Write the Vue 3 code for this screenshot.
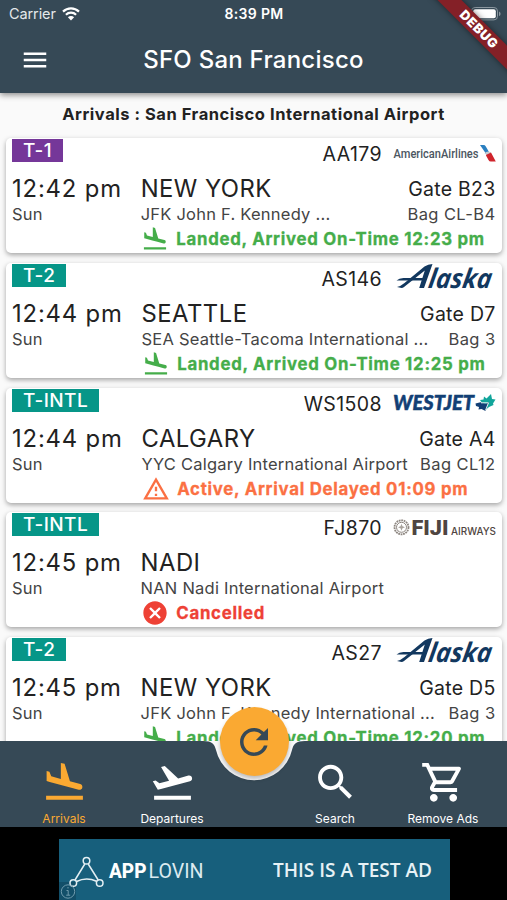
<template>
  <div class="screen">
    <header class="app-bar">
      <div class="status-bar">
        <div class="carrier">
          <span>Carrier</span>
          <svg width="18" height="14" viewBox="0 0 18 14">
            <path d="M1 4.6a11.6 11.6 0 0 1 16 0" class="wave" />
            <path d="M3.9 7.7a7.4 7.4 0 0 1 10.2 0" class="wave" />
            <path d="M9 13.4 5.9 10.2a4.4 4.4 0 0 1 6.2 0z" fill="#fff" />
          </svg>
        </div>
        <div class="clock">8:39 PM</div>
        <svg class="battery" width="30" height="14" viewBox="0 0 30 14">
          <rect x="0.5" y="0.5" width="26" height="12.4" rx="3.6" fill="none" stroke="#8b979f" />
          <rect x="2.2" y="2.2" width="22.6" height="9" rx="2" fill="#fff" />
          <path d="M28 4.5c2 .8 2 3.8 0 4.6z" fill="#8b979f" />
        </svg>
      </div>
      <div class="title-bar">
        <svg class="menu" viewBox="0 0 24 24">
          <path fill="currentColor" d="M3 18h18v-2H3v2zm0-5h18v-2H3v2zm0-7v2h18V6H3z" />
        </svg>
        <h1>SFO San Francisco</h1>
      </div>
      <div class="debug"><span>DEBUG</span></div>
    </header>

    <main class="list">
      <h2>Arrivals : San Francisco International Airport</h2>
      <article v-for="f in flights" :key="f.code" class="card">
        <div class="top">
          <span class="terminal" :class="{ purple: f.terminal === 'T-1' }">{{ f.terminal }}</span>
          <span class="code">{{ f.code }}</span>
          <svg class="logo" width="104" height="32" viewBox="392 0 104 32">
            <g v-if="f.airline === 'american'">
              <text x="393.5" y="20" class="aa" textLength="85" lengthAdjust="spacingAndGlyphs">AmericanAirlines</text>
              <path d="M480 7h3.5q1.5 0 2.3 1.4L489 14l-3.5 1z" fill="#2a7fc0" />
              <path d="M486.5 14.5 491 14.5l4.8 9h-5q-1.5 0-2.3-1.5l-2.5-4.5z" fill="#d0242c" />
              <path d="M484.5 15.5q3-3.5 6.5-1l-4.5 2.3z" fill="#c6ccd2" />
            </g>
            <g v-else-if="f.airline === 'alaska'" fill="#12385f">
              <path d="M396.5 17.5q2.5-2.5 7-2.5h21l-.5 2.6h-17.5z" />
              <path d="M397 24q4-1 7.5-4L424.5 3.5q3.5-2.5 8-2.5l-8.5 24h-4.8l5.6-17.5L404 24q-1 1-2.5 1z" />
              <g transform="translate(427.5 25) skewX(-9)">
                <text class="alaska" textLength="63" lengthAdjust="spacingAndGlyphs">laska</text>
              </g>
            </g>
            <g v-else-if="f.airline === 'westjet'">
              <text x="393" y="22" class="westjet" textLength="81" lengthAdjust="spacingAndGlyphs">WESTJET</text>
              <path d="m480 12 3.5-.5.5-3 2.5 2 4.5-4.500 1 5 3.5.5-2.500 4 .5 1.500-4.500 2-3.500 3-2-5z" fill="#11a59b" />
              <path d="m475.5 15.5 5-1.300 5.5 1.500 3-2-3.500 9.300-4-2-3 .5.500-2.500-3-1z" fill="#123f75" />
              <path d="M481 14.8h7.5l-3 7.5" fill="none" stroke="#fff" stroke-width=".9" />
            </g>
            <g v-else>
              <circle cx="401.5" cy="15.3" r="7" class="ring" stroke-width="1.8" stroke-dasharray="1.8 .7" />
              <circle cx="401.5" cy="15.3" r="5" class="ring" stroke-width="1" />
              <path d="m401.5 11.8 1 2.5 2.5 1-2.5 1-1 2.5-1-2.5-2.5-1 2.5-1z" fill="#aaa49e" />
              <text x="411.5" y="22.5" class="fiji" textLength="37" lengthAdjust="spacingAndGlyphs">FIJI</text>
              <text x="451" y="22.5" class="airways" textLength="45" lengthAdjust="spacingAndGlyphs">AIRWAYS</text>
            </g>
          </svg>
        </div>
        <div class="body">
          <div class="when">
            <div class="time">{{ f.time }}</div>
            <div class="day">Sun</div>
          </div>
          <div class="info">
            <div class="row big">
              <span>{{ f.city }}</span>
              <span class="gate">{{ f.gate }}</span>
            </div>
            <div class="row small">
              <span>{{ f.airport }}</span>
              <span class="bag">{{ f.bag }}</span>
            </div>
            <div class="status" :class="f.state">
              <svg viewBox="0 0 24 24"><path fill="currentColor" :d="icons[f.state]" /></svg>
              <span>{{ f.status }}</span>
            </div>
          </div>
        </div>
      </article>
    </main>

    <nav class="bottom-bar">
      <svg class="notch" width="507" height="86" viewBox="0 0 507 86">
        <path d="M0 0H203C212 0 214.5 3 216 9A39 39 0 0 0 292 9C293.5 3 296 0 305 0H507V86H0z" fill="#364956" />
      </svg>
      <template v-for="(t, i) in tabs" :key="t.label">
        <div v-if="i === 2" class="gap"></div>
        <div class="tab" :class="{ active: i === 0 }">
          <svg viewBox="0 0 24 24"><path fill="currentColor" :d="icons[t.icon]" /></svg>
          <span>{{ t.label }}</span>
        </div>
      </template>
      <button class="fab">
        <svg viewBox="0 0 24 24"><path fill="currentColor" :d="icons.refresh" /></svg>
      </button>
    </nav>

    <footer class="ad">
      <svg width="391" height="61" viewBox="59 839 391 61">
        <rect x="59" y="839" width="391" height="61" fill="#175f7c" />
        <rect x="59" y="882" width="17" height="18" fill="#124f69" />
        <g fill="none" stroke="#e4eff3" stroke-width="1.5">
          <path d="M84.8 864 75 880M88.2 864l10 16M76.5 881.5q10-5 20-.2" />
          <circle cx="86.5" cy="860.8" r="3.3" />
          <circle cx="73.3" cy="883" r="3.3" />
          <circle cx="99.7" cy="883" r="3.3" />
        </g>
        <g fill="none" stroke="#6f9bad">
          <circle cx="68" cy="891.5" r="6.7" />
          <path d="M68 887v1.5M66.5 890.5H68.2v4.5M66.2 895.2h4" />
        </g>
        <text x="109" y="877.5" class="brand bold" textLength="37.5" lengthAdjust="spacingAndGlyphs">APP</text>
        <text x="148.5" y="877.5" class="brand" textLength="55" lengthAdjust="spacingAndGlyphs">LOVIN</text>
        <text x="273" y="877" class="test" textLength="159" lengthAdjust="spacingAndGlyphs">THIS IS A TEST AD</text>
      </svg>
    </footer>
  </div>
</template>

<script setup>
const flights = [
  {
    terminal: "T-1",
    code: "AA179",
    airline: "american",
    time: "12:42 pm",
    city: "NEW YORK",
    airport: "JFK John F. Kennedy ...",
    gate: "Gate B23",
    bag: "Bag CL-B4",
    state: "landed",
    status: "Landed, Arrived On-Time 12:23 pm",
  },
  {
    terminal: "T-2",
    code: "AS146",
    airline: "alaska",
    time: "12:44 pm",
    city: "SEATTLE",
    airport: "SEA Seattle-Tacoma International ...",
    gate: "Gate D7",
    bag: "Bag 3",
    state: "landed",
    status: "Landed, Arrived On-Time 12:25 pm",
  },
  {
    terminal: "T-INTL",
    code: "WS1508",
    airline: "westjet",
    time: "12:44 pm",
    city: "CALGARY",
    airport: "YYC Calgary International Airport",
    gate: "Gate A4",
    bag: "Bag CL12",
    state: "delayed",
    status: "Active, Arrival Delayed 01:09 pm",
  },
  {
    terminal: "T-INTL",
    code: "FJ870",
    airline: "fiji",
    time: "12:45 pm",
    city: "NADI",
    airport: "NAN Nadi International Airport",
    gate: "",
    bag: "",
    state: "cancelled",
    status: "Cancelled",
  },
  {
    terminal: "T-2",
    code: "AS27",
    airline: "alaska",
    time: "12:45 pm",
    city: "NEW YORK",
    airport: "JFK John F. Kennedy International ...",
    gate: "Gate D5",
    bag: "Bag 3",
    state: "landed",
    status: "Landed, Arrived On-Time 12:20 pm",
  },
];

const tabs = [
  { label: "Arrivals", icon: "landed" },
  { label: "Departures", icon: "takeoff" },
  { label: "Search", icon: "search" },
  { label: "Remove Ads", icon: "cart" },
];

// 24x24 glyphs
const icons = {
  landed:
    "M2.5 19h19v2h-19zm7.18-5.73l4.35 1.16 5.31 1.42c.8.21 1.62-.26 1.84-1.06.21-.8-.26-1.62-1.06-1.84l-5.31-1.42-2.76-9.02L10.12 2v8.28L5.15 8.95l-.93-2.32-1.45-.39v5.17l1.6.43 5.31 1.43z",
  takeoff:
    "M2.5 19h19v2h-19zm19.57-9.36c-.21-.8-1.04-1.28-1.84-1.06L14.92 10l-6.9-6.43-1.93.51 4.14 7.17-4.97 1.33-1.97-1.54-1.45.39 1.82 3.16.77 1.33 1.6-.43 5.31-1.42 4.35-1.16L21 11.49c.81-.23 1.28-1.05 1.07-1.85z",
  search:
    "M15.5 14h-.79l-.28-.27C15.41 12.59 16 11.11 16 9.5 16 5.91 13.09 3 9.5 3S3 5.91 3 9.5 5.91 16 9.5 16c1.61 0 3.09-.59 4.23-1.57l.27.28v.79l5 4.99L20.49 19l-4.99-5zm-6 0C7.01 14 5 11.99 5 9.5S7.01 5 9.5 5 14 7.01 14 9.5 11.99 14 9.5 14z",
  cart: "M15.55 13c.75 0 1.41-.41 1.75-1.03l3.58-6.49c.37-.66-.11-1.48-.87-1.48H5.21l-.94-2H1v2h2l3.6 7.59-1.35 2.44C4.52 15.37 5.48 17 7 17h12v-2H7l1.1-2h7.45zM6.16 6h12.15l-2.76 5H8.53L6.16 6zM7 18c-1.1 0-1.99.9-1.99 2S5.9 22 7 22s2-.9 2-2-.9-2-2-2zm10 0c-1.1 0-1.99.9-1.99 2s.89 2 1.99 2 2-.9 2-2-.9-2-2-2z",
  delayed:
    "M12 5.99L19.53 19H4.47L12 5.99M12 2L1 21h22L12 2zm1 14h-2v2h2v-2zm0-6h-2v4h2v-4z",
  cancelled:
    "M12 2C6.47 2 2 6.47 2 12s4.47 10 10 10 10-4.47 10-10S17.53 2 12 2zm5 13.59L15.59 17 12 13.41 8.41 17 7 15.59 10.59 12 7 8.41 8.41 7 12 10.59 15.59 7 17 8.41 13.41 12 17 15.59z",
  refresh:
    "M17.65 6.35C16.2 4.9 14.21 4 12 4c-4.42 0-7.99 3.58-7.99 8s3.57 8 7.99 8c3.73 0 6.84-2.55 7.73-6h-2.08c-.82 2.33-3.04 4-5.65 4-3.31 0-6-2.69-6-6s2.69-6 6-6c1.66 0 3.14.69 4.22 1.78L13 11h7V4l-2.35 2.35z",
};
</script>

<style>
body {
  background: #fafafa;
}
</style>

<style scoped>
.screen {
  width: 507px;
  height: 900px;
  display: flex;
  flex-direction: column;
  overflow: hidden;
  background: #fafafa;
  font-family: Inter, "Liberation Sans", sans-serif;
  color: #222;
}

.app-bar {
  position: relative;
  z-index: 2;
  flex: none;
  height: 93px;
  background: #364956;
  color: #fff;
  box-shadow: 0 2px 6px rgba(0, 0, 0, 0.45);
}

.status-bar {
  display: grid;
  grid-template-columns: 1fr auto 1fr;
  align-items: center;
  height: 27px;
  padding: 0 6px 0 9px;
  font-size: 14.5px;
}
.carrier {
  display: flex;
  align-items: center;
  gap: 6px;
  color: #e4e8ea;
}
.carrier span {
  letter-spacing: -0.1px;
}
.clock {
  font-weight: 600;
  font-size: 14px;
  letter-spacing: 0.3px;
  margin-right: 2px;
}
.wave {
  fill: none;
  stroke: #fff;
  stroke-width: 2.2;
}
.battery {
  justify-self: end;
}

.title-bar {
  display: grid;
  grid-template-columns: 50px 1fr 50px;
  align-items: center;
  height: 66px;
  padding: 0 20px;
}
.menu {
  width: 30px;
  height: 30px;
}
h1 {
  margin: 0;
  text-align: center;
  font-size: 24px;
  font-weight: 500;
  letter-spacing: 0.25px;
  line-height: 30px;
  white-space: nowrap;
}

/* corner ribbon */
.debug {
  position: absolute;
  top: 0;
  right: 0;
  width: 80px;
  height: 80px;
  overflow: hidden;
}
.debug span {
  position: absolute;
  left: -8px;
  top: 20.5px;
  width: 120px;
  height: 17px;
  line-height: 17px;
  text-align: center;
  font-size: 13px;
  font-weight: 900;
  letter-spacing: 0.6px;
  background: #842027;
  box-shadow: 0 0 6px rgba(0, 0, 0, 0.5);
  transform: rotate(45deg);
}

.list {
  flex: none;
  height: 648px;
  overflow: hidden;
}
h2 {
  margin: 0;
  height: 45.4px;
  line-height: 42px;
  text-align: center;
  font-size: 16.5px;
  font-weight: 700;
  letter-spacing: 0.54px;
  white-space: nowrap;
}

.card {
  height: 115px;
  margin: 0 5px 9.7px 6px;
  padding: 0 7px 0 6px;
  box-sizing: border-box;
  background: #fff;
  border-radius: 5px;
  box-shadow: 0 2px 5px rgba(0, 0, 0, 0.35);
  white-space: nowrap;
}
.top {
  display: flex;
  align-items: flex-start;
  height: 37px;
}
.terminal {
  margin-top: 1px;
  padding: 0 11px;
  height: 23px;
  line-height: 23px;
  font-size: 19px;
  font-weight: 500;
  letter-spacing: 0.4px;
  color: #fff;
  background: #069688;
}
.terminal.purple {
  background: #753799;
}
.code {
  margin-left: auto;
  line-height: 32px;
  font-size: 19.5px;
  letter-spacing: 0.4px;
}
.logo {
  margin: 0 -1px 0 10px;
  overflow: visible;
}
.body {
  display: flex;
  gap: 18.8px;
}
.time,
.big {
  height: 28px;
  line-height: 28px;
  font-size: 23.8px;
  letter-spacing: 0.5px;
}
.time {
  letter-spacing: 0.85px;
}
.day,
.small {
  height: 22px;
  line-height: 22px;
  font-size: 16.5px;
  letter-spacing: 0.23px;
  color: #444;
}
.info {
  flex: 1;
}
.row {
  display: flex;
  justify-content: space-between;
}
.gate {
  font-size: 19.5px;
  letter-spacing: 0.25px;
  margin-right: -0.5px;
}
.bag {
  letter-spacing: 0.4px;
  margin-right: -0.5px;
}
.status {
  display: flex;
  align-items: center;
  gap: 7px;
  height: 28px;
  padding-left: 0.7px;
  font-size: 16.8px;
  font-weight: 700;
  letter-spacing: 0.74px;
}
.status svg {
  width: 28px;
  height: 28px;
}
.status span {
  -webkit-text-stroke: 0.3px currentColor;
}
.landed {
  color: #45ad4a;
}
.delayed {
  color: #fb7043;
}
.cancelled {
  color: #ee4135;
}

.aa {
  font: 500 12px Roboto, sans-serif;
  fill: #4b5661;
}
.alaska {
  font: italic 700 27px "Open Sans", sans-serif;
}
.westjet {
  font: italic 900 20px Lato, sans-serif;
  fill: #123f75;
  stroke: #123f75;
  stroke-width: 0.5px;
}
.ring {
  fill: none;
  stroke: #8d8680;
}
.fiji {
  font: 900 19.5px Roboto, sans-serif;
  fill: #4f4541;
}
.airways {
  font: 500 10px Inter, sans-serif;
  fill: #4f4541;
}

.bottom-bar {
  position: relative;
  flex: none;
  display: flex;
  height: 86px;
  padding: 0 10px;
}
.notch {
  position: absolute;
  left: 0;
  top: 0;
  z-index: 1;
}
.tab {
  position: relative;
  z-index: 3;
  width: 108px;
  padding-top: 17.5px;
  display: flex;
  flex-direction: column;
  align-items: center;
  color: #fff;
  font-size: 12px;
}
.tab svg {
  width: 49px;
  height: 49px;
}
.tab span {
  line-height: 16px;
  margin-top: 6px;
}
.tab.active {
  color: #faa932;
}
.gap {
  width: 55px;
}
.fab {
  position: absolute;
  z-index: 2;
  left: 219.5px;
  top: -34px;
  width: 69px;
  height: 69px;
  padding: 0;
  border: 0;
  border-radius: 50%;
  display: flex;
  align-items: center;
  justify-content: center;
  background: #faa932;
  color: #364956;
  box-shadow: 0 3px 4px rgba(0, 0, 0, 0.25);
}
.fab svg {
  width: 42px;
  height: 42px;
}

.ad {
  flex: 1;
  padding: 12px 0 0 59px;
  background: #000;
}
.ad svg {
  display: block;
}
.brand {
  font: 400 20px Roboto, sans-serif;
  fill: #dceaf0;
}
.brand.bold {
  font-weight: 800;
  fill: #fff;
}
.test {
  font: 600 20px "Open Sans", sans-serif;
  fill: #e6f1f5;
}
</style>
